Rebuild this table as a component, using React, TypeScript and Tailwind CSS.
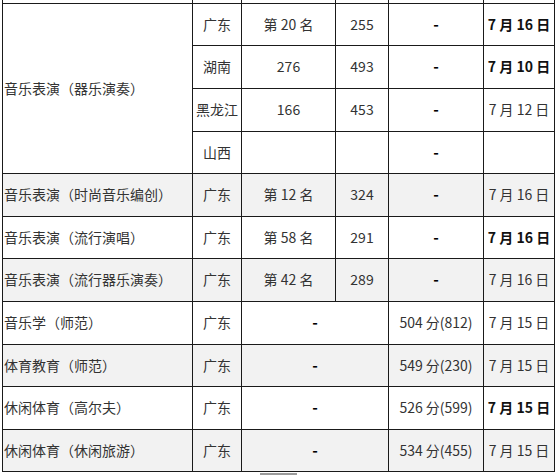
import React from 'react';

type Row = {
  major?: string;
  span?: number;
  province: string;
  rank?: string;
  score?: string;
  line?: string;
  date: string;
  bold?: boolean;
  merged?: boolean;
  grey?: boolean;
  h: string;
};

const rows: Row[] = [
  { major: '音乐表演（器乐演奏）', span: 4, province: '广东', rank: '第 20 名', score: '255', date: '7 月 16 日', bold: true, h: 'h-[42px]' },
  { province: '湖南', rank: '276', score: '493', date: '7 月 10 日', bold: true, h: 'h-[43px]' },
  { province: '黑龙江', rank: '166', score: '453', date: '7 月 12 日', h: 'h-[43px]' },
  { province: '山西', rank: '', score: '', date: '', h: 'h-[42px]' },
  { major: '音乐表演（时尚音乐编创）', province: '广东', rank: '第 12 名', score: '324', date: '7 月 16 日', grey: true, h: 'h-[43px]' },
  { major: '音乐表演（流行演唱）', province: '广东', rank: '第 58 名', score: '291', date: '7 月 16 日', bold: true, h: 'h-[42px]' },
  { major: '音乐表演（流行器乐演奏）', province: '广东', rank: '第 42 名', score: '289', date: '7 月 16 日', grey: true, h: 'h-[43px]' },
  { major: '音乐学（师范）', province: '广东', merged: true, line: '504 分(812)', date: '7 月 15 日', h: 'h-[43px]' },
  { major: '体育教育（师范）', province: '广东', merged: true, line: '549 分(230)', date: '7 月 15 日', grey: true, h: 'h-[42px]' },
  { major: '休闲体育（高尔夫）', province: '广东', merged: true, line: '526 分(599)', date: '7 月 15 日', bold: true, h: 'h-[43px]' },
  { major: '休闲体育（休闲旅游）', province: '广东', merged: true, line: '534 分(455)', date: '7 月 15 日', grey: true, h: 'h-[42px]' },
];

const cell = 'border border-[#1a1a1a] p-0 text-center align-middle';
const dash = 'font-bold text-black text-[15px]';

export default function App() {
  return (
    <div
      className="w-[559px] h-[475px] overflow-hidden bg-white text-[14px] text-[#333]"
      style={{ fontFamily: '"Noto Sans CJK SC", "Noto Sans", sans-serif' }}
    >
      <table className="ml-[2px] w-[552px] table-fixed border-collapse">
        <colgroup>
          <col className="w-[190px]" />
          <col className="w-[49px]" />
          <col className="w-[94px]" />
          <col className="w-[53px]" />
          <col className="w-[95px]" />
          <col className="w-[71px]" />
        </colgroup>
        <tbody>
          {/* row cut off at the top */}
          <tr className="h-[3px]">
            {[0, 1, 2, 3, 4, 5].map((i) => (
              <td key={i} className="h-[3px] border-x border-[#1a1a1a] p-0" />
            ))}
          </tr>
          {rows.map((r, i) => (
            <tr key={i} className={`${r.h} ${r.grey ? 'bg-[#f2f2f2]' : 'bg-white'}`}>
              {r.major && (
                <td rowSpan={r.span ?? 1} className={`${cell} !text-left pl-[1px] whitespace-nowrap`}>
                  {r.major}
                </td>
              )}
              <td className={`${cell} whitespace-nowrap`}>{r.province}</td>
              {r.merged ? (
                <td colSpan={2} className={`${cell} ${dash}`}>-</td>
              ) : (
                <>
                  <td className={cell}>{r.rank}</td>
                  <td className={cell}>{r.score}</td>
                </>
              )}
              <td className={`${cell} ${r.merged ? 'whitespace-nowrap' : dash}`}>
                {r.merged ? r.line : '-'}
              </td>
              <td className={`${cell} whitespace-nowrap ${r.bold ? 'font-bold text-[#111]' : ''}`}>{r.date}</td>
            </tr>
          ))}
        </tbody>
      </table>
      <div className="ml-[260px] mt-[1px] h-[3px] w-[37px] bg-[#9a9a9a]" />
    </div>
  );
}
